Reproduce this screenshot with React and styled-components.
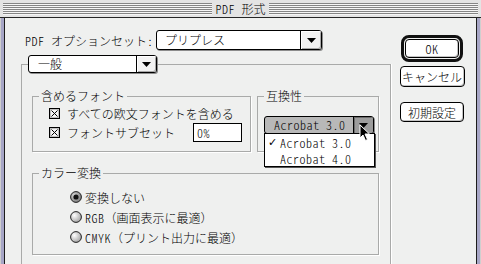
import React from 'react';
import styled, { createGlobalStyle } from 'styled-components';

const GlobalStyle = createGlobalStyle`
  html, body {
    margin: 0;
    padding: 0;
    background: #eff0ef;
  }
  body {
    font-family: 'Noto Sans CJK JP', 'Liberation Sans', sans-serif;
    font-size: 12px;
    font-weight: 300;
    color: #000;
  }
`;

// half-width latin, closer to the old bitmap system font
const Roman = styled.span`
  font-feature-settings: 'hwid' 1;
  letter-spacing: 0.5px;
`;

const Window = styled.div`
  width: 481px;
  height: 264px;
  overflow: hidden;
  display: flex;
  flex-direction: column;
  background: #eff0ef;
`;

const TitleBar = styled.div`
  height: 17px;
  flex: none;
  display: flex;
  align-items: center;
  gap: 3px;
  padding: 0 3px;
  background: #e4e4e4;
  border-bottom: 1px solid #262626;
`;

const Stripes = styled.div`
  flex: 1;
  height: 12px;
  background: repeating-linear-gradient(to bottom, #858585 0 1px, #f6f6f6 1px 2px);
`;

const Title = styled.span`
  line-height: 17px;
  font-size: 12px;
`;

const Body = styled.div`
  flex: 1;
  display: flex;
  padding: 0 5px;
  box-shadow: inset 1px 0 #cfcfcf, inset 4px 0 #a7a6c6, inset 5px 0 #1c1c1c,
    inset -1px 0 #cfcfcf, inset -4px 0 #a7a6c6, inset -5px 0 #1c1c1c;
`;

const Main = styled.div`
  width: 386px;
  display: flex;
  flex-direction: column;
  padding-left: 16px;
  box-sizing: border-box;
`;

const OptionRow = styled.div`
  display: flex;
  align-items: center;
  margin-top: 12px;
  padding-left: 4px;
`;

const FieldLabel = styled.span`
  width: 131px;
  white-space: nowrap;
`;

const Popup = styled.div`
  position: relative;
  display: flex;
  width: ${p => p.$w}px;
  height: ${p => p.$h}px;
  box-sizing: border-box;
  border: 1px solid #000;
  border-radius: 3px;
  background: ${p => (p.$pressed ? '#b8b8b8' : '#fff')};
  box-shadow: 1px 1px 0 #8c8c8c;
  flex: none;
`;

const PopupText = styled.span`
  flex: 1;
  padding-left: ${p => p.$pad || 8}px;
  line-height: ${p => p.$h - 2}px;
  white-space: nowrap;
`;

const PopupArrow = styled.span`
  width: ${p => p.$w || 19}px;
  border-left: 1px solid #000;
  display: flex;
  align-items: center;
  justify-content: center;
  border-radius: 0 2px 2px 0;
  background: ${p => (p.$pressed ? '#9c9c9c' : '#f2f2f2')};
  box-shadow: ${p =>
    p.$pressed ? 'inset 1px 1px 0 #6c6c6c' : 'inset 1px 1px 0 #fff, inset -1px -1px 0 #a8a8a8'};
`;

const PanelWrap = styled.div`
  flex: 1;
  display: flex;
  flex-direction: column;
  margin-top: 5px;
`;

const TabPopup = styled.div`
  margin-left: 7px;
  margin-bottom: -9px;
  position: relative;
  z-index: 1;
`;

const Panel = styled.div`
  flex: 1;
  width: 370px;
  box-sizing: border-box;
  border: 1px solid #a9aaa9;
  border-bottom: none;
  box-shadow: 1px 0 0 #fff;
  padding: 24px 11px 0 10px;
  display: grid;
  grid-template-columns: 219px 122px;
  column-gap: 6px;
  row-gap: 14px;
  align-content: start;
`;

const Group = styled.fieldset`
  margin: 0;
  padding: 0;
  min-width: 0;
  border: 1px solid #a9aaa9;
  box-shadow: 1px 1px 0 #fff;
  grid-column: ${p => (p.$wide ? '1 / -1' : 'auto')};
`;

const Legend = styled.legend`
  margin-left: 6px;
  padding: 0 2px;
  font-size: 12px;
  line-height: 14px;
`;

const GroupBody = styled.div`
  padding: ${p => p.$pad};
`;

const CheckRow = styled.div`
  display: flex;
  align-items: center;
  height: 19px;
  gap: 7px;
  white-space: nowrap;
`;

const SubsetLabel = styled.span`
  width: 119px;
`;

const TextField = styled.div`
  width: 49px;
  height: 19px;
  box-sizing: border-box;
  border: 1px solid #000;
  background: #fff;
  padding-left: 3px;
  line-height: 17px;
`;

const Menu = styled.div`
  position: absolute;
  top: 100%;
  left: -1px;
  width: 111px;
  box-sizing: border-box;
  border: 1px solid #000;
  background: #fff;
  box-shadow: 1px 1px 0 #555;
  z-index: 2;
`;

const MenuItem = styled.div`
  display: flex;
  align-items: center;
  height: 16px;
  white-space: nowrap;
`;

const Check = styled.span`
  width: 15px;
  padding-left: 3px;
  box-sizing: border-box;
  font-family: 'DejaVu Sans', sans-serif;
  font-size: 11px;
`;

const Cursor = styled.svg`
  position: absolute;
  left: 94px;
  top: 7px;
  z-index: 3;
`;

const RadioRow = styled.div`
  display: flex;
  align-items: center;
  height: 20px;
  gap: 3px;
  white-space: nowrap;
`;

const ButtonColumn = styled.div`
  flex: 1;
  display: flex;
  flex-direction: column;
  align-items: center;
  padding: 17px 3px 0 0;
`;

const DefaultRing = styled.div`
  border: 3px solid #111;
  border-radius: 8px;
  padding: 1px;
`;

const Button = styled.div`
  width: ${p => p.$w}px;
  height: ${p => p.$h}px;
  box-sizing: border-box;
  border: 1px solid #000;
  border-radius: 4px;
  background: #fff;
  box-shadow: inset -1px -1px 0 #c4c4c4;
  display: flex;
  align-items: center;
  justify-content: center;
  margin-top: ${p => p.$mt || 0}px;
  white-space: nowrap;
`;

const Triangle = () => (
  <svg width="9" height="5" viewBox="0 0 9 5">
    <polygon points="0,0 9,0 4.5,5" fill="#000" />
  </svg>
);

const CheckBox = () => (
  <svg width="11" height="11" viewBox="0 0 11 11">
    <rect x="0.5" y="0.5" width="10" height="10" fill="#fff" stroke="#000" />
    <rect x="1.5" y="1.5" width="8" height="8" fill="#f4f4f4" stroke="#c0c0c0" />
    <path d="M2.5 2.5 L8.5 8.5 M8.5 2.5 L2.5 8.5" stroke="#000" strokeWidth="1" />
  </svg>
);

const Radio = ({ on }) => (
  <svg width="12" height="12" viewBox="0 0 12 12">
    <defs>
      <radialGradient id={on ? 'rOn' : 'rOff'} cx="0.35" cy="0.35" r="0.7">
        <stop offset="0" stopColor={on ? '#d8d8d8' : '#ffffff'} />
        <stop offset="1" stopColor={on ? '#7a7a7a' : '#a4a4a4'} />
      </radialGradient>
    </defs>
    <circle cx="6" cy="6" r="5.4" fill={`url(#${on ? 'rOn' : 'rOff'})`} stroke="#222" strokeWidth="1" />
    {on && <circle cx="6" cy="6" r="2.6" fill="#111" />}
  </svg>
);

const options = [
  { label: '変換しない', on: true },
  { roman: 'RGB', label: '（画面表示に最適）' },
  { roman: 'CMYK', label: '（プリント出力に最適）' },
];

export default function App() {
  return (
    <Window>
      <GlobalStyle />
      <TitleBar>
        <Stripes />
        <Title>
          <Roman>PDF </Roman>形式
        </Title>
        <Stripes />
      </TitleBar>
      <Body>
        <Main>
          <OptionRow>
            <FieldLabel>
              <Roman>PDF </Roman>オプションセット<Roman>:</Roman>
            </FieldLabel>
            <Popup $w={166} $h={20}>
              <PopupText $h={20}>プリプレス</PopupText>
              <PopupArrow $w={20}>
                <Triangle />
              </PopupArrow>
            </Popup>
          </OptionRow>

          <PanelWrap>
            <TabPopup>
              <Popup $w={129} $h={18}>
                <PopupText $h={18} $pad={9}>一般</PopupText>
                <PopupArrow $w={19}>
                  <Triangle />
                </PopupArrow>
              </Popup>
            </TabPopup>

            <Panel>
              <Group>
                <Legend>含めるフォント</Legend>
                <GroupBody $pad="1px 0 9px 16px">
                  <CheckRow>
                    <CheckBox />
                    すべての欧文フォントを含める
                  </CheckRow>
                  <CheckRow>
                    <CheckBox />
                    <SubsetLabel>フォントサブセット</SubsetLabel>
                    <TextField>
                      <Roman>0%</Roman>
                    </TextField>
                  </CheckRow>
                </GroupBody>
              </Group>

              <Group>
                <Legend>互換性</Legend>
                <GroupBody $pad="13px 0 0 6px">
                  <Popup $w={110} $h={18} $pressed>
                    <PopupText $h={18} $pad={9}>
                      <Roman>Acrobat 3.0</Roman>
                    </PopupText>
                    <PopupArrow $w={19} $pressed>
                      <Triangle />
                    </PopupArrow>
                    <Menu>
                      <MenuItem>
                        <Check>✓</Check>
                        <Roman>Acrobat 3.0</Roman>
                      </MenuItem>
                      <MenuItem>
                        <Check />
                        <Roman>Acrobat 4.0</Roman>
                      </MenuItem>
                    </Menu>
                    <Cursor width="12" height="18" viewBox="0 0 12 18">
                      <path
                        d="M1 1 L1 14 L4 11 L6.5 16.5 L8.5 15.5 L6 10 L10.5 10 Z"
                        fill="#000"
                        stroke="#fff"
                        strokeWidth="1"
                      />
                    </Cursor>
                  </Popup>
                </GroupBody>
              </Group>

              <Group $wide>
                <Legend>カラー変換</Legend>
                <GroupBody $pad="7px 0 7px 37px">
                  {options.map(o => (
                    <RadioRow key={o.label}>
                      <Radio on={o.on} />
                      <span>
                        {o.roman && <Roman>{o.roman}</Roman>}
                        {o.label}
                      </span>
                    </RadioRow>
                  ))}
                </GroupBody>
              </Group>
            </Panel>
          </PanelWrap>
        </Main>

        <ButtonColumn>
          <DefaultRing>
            <Button $w={54} $h={19}>
              <Roman>OK</Roman>
            </Button>
          </DefaultRing>
          <Button $w={65} $h={21} $mt={4}>キャンセル</Button>
          <Button $w={64} $h={20} $mt={15}>初期設定</Button>
        </ButtonColumn>
      </Body>
    </Window>
  );
}
